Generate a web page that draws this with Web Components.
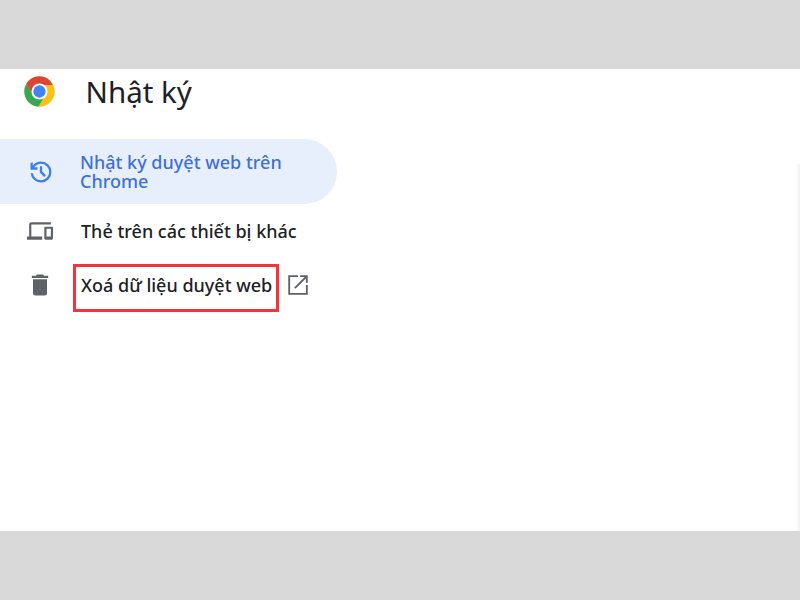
<!DOCTYPE html>
<html lang="vi">
<head>
<meta charset="utf-8">
<title>Nhật ký</title>
<style>
    html, body { margin: 0; height: 100%; background: #fff; }
</style>
</head>
<body>
<history-page>
    <history-header slot="header">Nhật ký</history-header>
    <side-item active icon="history">Nhật ký duyệt web trên Chrome</side-item>
    <side-item icon="devices">Thẻ trên các thiết bị khác</side-item>
    <side-item icon="trash" outlined external>Xoá dữ liệu duyệt web</side-item>
</history-page>

<script>
const ICONS = {
    history: '<path d="M12 21q-3.45 0-6.012-2.288T3.05 13H5.1q.35 2.6 2.313 4.3T12 19q2.925 0 4.963-2.037T19 12t-2.037-4.962T12 5q-1.725 0-3.225.8T6.25 8H9v2H3V4h2v2.35q1.275-1.6 3.113-2.475T12 3q3.75 0 6.375 2.625T21 12t-2.625 6.375T12 21m2.8-4.8L11 12.4V7h2v4.6l3.2 3.2z"/>',
    devices: '<path d="M4 6h18V4H4a2 2 0 0 0-2 2v11H0v3h14v-3H4V6zm19 2h-6a1 1 0 0 0-1 1v10a1 1 0 0 0 1 1h6a1 1 0 0 0 1-1V9a1 1 0 0 0-1-1zm-1 9h-4v-7h4v7z"/>',
    trash: '<path d="M6 19a2 2 0 0 0 2 2h8a2 2 0 0 0 2-2V7H6v12zM19 4h-3.5l-1-1h-5l-1 1H5v2h14V4z"/>'
};

class HistoryPage extends HTMLElement {
    constructor() {
        super();
        this.attachShadow({ mode: 'open' }).innerHTML = `
            <style>
                :host {
                    display: flex;
                    flex-direction: column;
                    height: 600px;
                    font-family: "Noto Sans", "Open Sans", sans-serif;
                }
                .band { height: 69px; flex: none; background: #d9d9d9; }
                .sheet {
                    flex: 1;
                    display: flex;
                    flex-direction: column;
                    background: #fff;
                    position: relative;
                }
                nav {
                    display: flex;
                    flex-direction: column;
                    width: 337px;
                    margin-top: 29px;
                }
                /* faint edge of the page content on the far right */
                .edge {
                    position: absolute;
                    right: 0;
                    top: 95px;
                    bottom: 0;
                    width: 4px;
                    background: linear-gradient(to right, #fff, #f1f1f1);
                }
            </style>
            <div class="band"></div>
            <div class="sheet">
                <slot name="header"></slot>
                <nav><slot></slot></nav>
                <div class="edge"></div>
            </div>
            <div class="band"></div>
        `;
    }
}

class HistoryHeader extends HTMLElement {
    constructor() {
        super();
        this.attachShadow({ mode: 'open' }).innerHTML = `
            <style>
                :host {
                    display: flex;
                    align-items: center;
                    height: 37px;
                    padding: 4px 0 0 24px;
                    color: #202124;
                }
                svg { width: 31px; height: 31px; flex: none; }
                h1 {
                    margin: 0 0 0 30.5px;
                    font-size: 29.5px;
                    line-height: 37px;
                    font-weight: 400;
                }
            </style>
            <svg viewBox="0 0 48 48">
                <circle cx="24" cy="24" r="23.5" fill="#fbc116"/>
                <path d="M24 .5A23.5 23.5 0 0 0 3.6 12.3L13.8 30 24 14h20.4A23.5 23.5 0 0 0 24 .5z" fill="#db4437"/>
                <path d="M3.6 12.3A23.5 23.5 0 0 0 22.4 47.4L32.6 30H13.8z" fill="#34a853"/>
                <circle cx="24" cy="24" r="12.5" fill="#fff"/>
                <circle cx="24" cy="24" r="9.5" fill="#3f84f2"/>
            </svg>
            <h1><slot></slot></h1>
        `;
    }
}

class SideItem extends HTMLElement {
    constructor() {
        super();
        const icon = ICONS[this.getAttribute('icon')] || '';
        const external = this.hasAttribute('external') ? `
            <svg class="ext" viewBox="0 0 24 24">
                <path d="M3 3h9v1.7H4.7v14.6h14.6V12H21v9H3V3zm11 0h7v7h-1.7V5.9l-9.6 9.6-1.2-1.2 9.6-9.6H14V3z"/>
            </svg>` : '';
        this.attachShadow({ mode: 'open' }).innerHTML = `
            <style>
                :host {
                    display: flex;
                    align-items: center;
                    height: 54px;
                    padding-left: 28px;
                    box-sizing: border-box;
                    font-size: 18px;
                    line-height: 19px;
                    font-weight: 500;
                    color: #202124;
                }
                :host([active]) {
                    height: 65px;
                    background: #e7effd;
                    border-radius: 0 33px 33px 0;
                    color: #3f6fd8;
                }
                .icon { width: 28px; height: 28px; flex: none; margin: 0 -2px; fill: #5f6368; }
                :host([active]) .icon { fill: #3f7fe8; margin: 0 -2px 0 -1.5px; }
                .label { margin-left: 27.5px; width: 225px; }
                :host([active]) .label { margin-left: 27.5px; }
                :host([icon="devices"]) .icon { margin: 0 0 0 -1px; width: 26px; height: 26px; }
                :host([icon="devices"]) .label { margin-left: 28px; white-space: nowrap; }
                :host([outlined]) .label {
                    width: auto;
                    margin: 6px 0 0 21px;
                    padding: 0 4px 6px 5px;
                    height: 48px;
                    box-sizing: border-box;
                    display: flex;
                    align-items: center;
                    border: 3px solid #f8323a;
                    white-space: nowrap;
                }
                .ext { width: 26px; height: 26px; margin-left: 6px; fill: #5f6368; flex: none; }
            </style>
            <svg class="icon" viewBox="0 0 24 24">${icon}</svg>
            <span class="label"><slot></slot></span>
            ${external}
        `;
    }
}

customElements.define('history-page', HistoryPage);
customElements.define('history-header', HistoryHeader);
customElements.define('side-item', SideItem);
</script>
</body>
</html>
